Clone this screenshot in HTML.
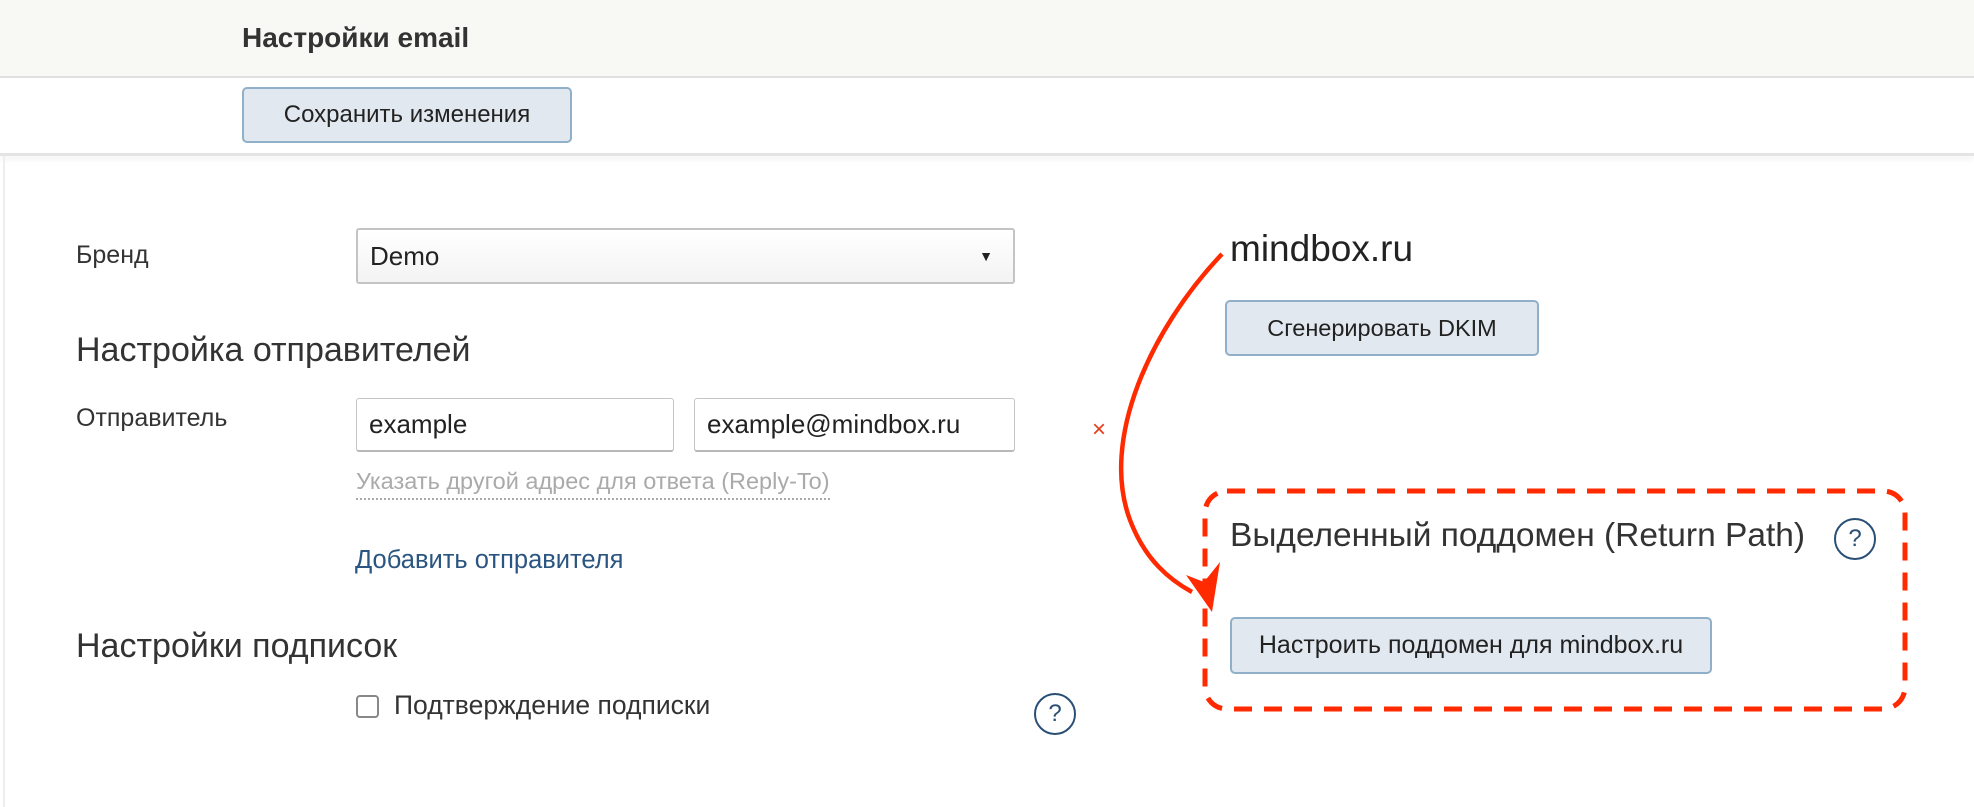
<!DOCTYPE html>
<html><head><meta charset="utf-8"><style>
body{margin:0;width:1974px;height:807px;background:#fff;font-family:"Liberation Sans",sans-serif;color:#333;position:relative;overflow:hidden}
.a{position:absolute;white-space:nowrap}
.btn{position:absolute;background:#e1e8ef;border:2px solid #8fb0c8;border-radius:5px;box-sizing:border-box;font-size:24px;color:#222;display:flex;align-items:center;justify-content:center}
.inp{position:absolute;border:1px solid #c4c4c4;border-bottom:2px solid #b8b8b8;border-radius:3px;box-sizing:border-box;font-size:26px;color:#222;padding-left:12px;display:flex;align-items:center}
.q{position:absolute;border:2px solid #2a4f75;border-radius:50%;color:#2a4f75;font-size:24px;display:flex;align-items:center;justify-content:center;box-sizing:border-box}
</style></head><body>
<div class="a" style="left:0;top:0;width:1974px;height:76px;background:#f8f8f4;border-bottom:2px solid #e0e0e0"></div>
<div class="a" style="left:242px;top:22px;font-size:28px;font-weight:bold;color:#333">Настройки email</div>
<div class="a" style="left:0;top:153px;width:1974px;height:3px;background:#e4e4e4;box-shadow:0 3px 6px rgba(0,0,0,.08)"></div>
<div class="a" style="left:3px;top:156px;width:2px;height:651px;background:#eee"></div>
<div class="btn" style="left:242px;top:87px;width:330px;height:56px">Сохранить изменения</div>
<div class="a" style="left:76px;top:241px;font-size:25px">Бренд</div>
<div class="inp" style="left:356px;top:228px;width:659px;height:56px;background:linear-gradient(#fff,#f3f3f3);border:2px solid #c4c4c4;font-size:26px">Demo<span style="position:absolute;right:20px;font-size:14px">▼</span></div>
<div class="a" style="left:76px;top:331px;font-size:34px;color:#333">Настройка отправителей</div>
<div class="a" style="left:76px;top:404px;font-size:25px">Отправитель</div>
<div class="inp" style="left:356px;top:398px;width:318px;height:54px">example</div>
<div class="inp" style="left:694px;top:398px;width:321px;height:54px">example@mindbox.ru</div>
<div class="a" style="left:356px;top:468px;font-size:23.5px;color:#aaa;border-bottom:2px dotted #aaa;padding-bottom:3px">Указать другой адрес для ответа (Reply-To)</div>
<div class="a" style="left:355px;top:546px;font-size:25.5px;color:#2a5580">Добавить отправителя</div>
<div class="a" style="left:76px;top:627px;font-size:34px;color:#333">Настройки подписок</div>
<div class="a" style="left:356px;top:695px;width:23px;height:23px;border:2px solid #888;border-radius:4px;box-sizing:border-box"></div>
<div class="a" style="left:394px;top:690px;font-size:26.5px">Подтверждение подписки</div>
<div class="q" style="left:1034px;top:693px;width:42px;height:42px">?</div>
<div class="a" style="left:1092px;top:416px;font-size:24px;color:#e53c1a">×</div>
<div class="a" style="left:1230px;top:228px;font-size:37px;color:#222">mindbox.ru</div>
<div class="btn" style="left:1225px;top:300px;width:314px;height:56px;font-size:23.5px">Сгенерировать DKIM</div>
<div class="a" style="left:1230px;top:517px;font-size:33.5px;color:#333">Выделенный поддомен (Return Path)</div>
<div class="q" style="left:1834px;top:518px;width:42px;height:42px">?</div>
<div class="btn" style="left:1230px;top:617px;width:482px;height:57px;font-size:25px">Настроить поддомен для mindbox.ru</div>
<svg class="a" style="left:0;top:0" width="1974" height="807">
<rect x="1205" y="491" width="700" height="218" rx="22" fill="none" stroke="#ff2a00" stroke-width="5" stroke-dasharray="18 12"/>
<path d="M1222,254 C1150,330 1100,440 1130,520 C1145,560 1170,580 1192,592" fill="none" stroke="#ff2a00" stroke-width="4.5"/>
<path d="M1212,612 L1186,575 L1204,582 L1220,562 Z" fill="#ff2a00"/>
</svg>
</body></html>
